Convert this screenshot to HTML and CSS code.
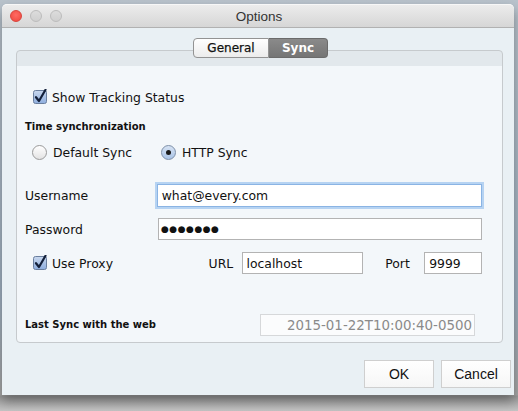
FILE: index.html
```html
<!DOCTYPE html>
<html>
<head>
<meta charset="utf-8">
<link rel="stylesheet" href="styles.css">
</head>
<body>
<div class="window">
  <div class="titlebar">
    <div class="lights">
      <span class="light red"></span>
      <span class="light gray"></span>
      <span class="light gray"></span>
    </div>
    <div class="title">Options</div>
  </div>
  <div class="content">
    <div class="tabwrap">
      <div class="tabs">
        <div class="tab">General</div>
        <div class="tab active">Sync</div>
      </div>
      <div class="box">
        <div class="row check-row first">
          <svg class="cb" width="14" height="15" viewBox="0 0 14 15"><defs><linearGradient id="g1" x1="0" y1="0" x2="0" y2="1"><stop offset="0" stop-color="#c9d8ee"/><stop offset="1" stop-color="#8eaede"/></linearGradient></defs><rect x="0.5" y="1.5" width="13" height="13" rx="2" fill="url(#g1)" stroke="#6a7f9e"/><path d="M3 8.2 L6 12 L12.5 0.8" fill="none" stroke="#13203a" stroke-width="2.2" stroke-linecap="round" stroke-linejoin="round"/></svg>
          <span class="lbl">Show Tracking Status</span>
        </div>
        <div class="section">Time synchronization</div>
        <div class="row radio-row">
          <div class="radio-item first-radio">
            <span class="radio"></span><span class="lbl">Default Sync</span>
          </div>
          <div class="radio-item">
            <span class="radio on"><span class="dot"></span></span><span class="lbl">HTTP Sync</span>
          </div>
        </div>
        <div class="row field-row user">
          <span class="flabel">Username</span>
          <div class="field focus">what@every.com</div>
        </div>
        <div class="row field-row pass">
          <span class="flabel">Password</span>
          <div class="field dots">●●●●●●●</div>
        </div>
        <div class="row proxy-row">
          <div class="proxy-check">
            <svg class="cb" width="14" height="15" viewBox="0 0 14 15"><defs><linearGradient id="g2" x1="0" y1="0" x2="0" y2="1"><stop offset="0" stop-color="#c9d8ee"/><stop offset="1" stop-color="#8eaede"/></linearGradient></defs><rect x="0.5" y="1.5" width="13" height="13" rx="2" fill="url(#g2)" stroke="#6a7f9e"/><path d="M3 8.2 L6 12 L12.5 0.8" fill="none" stroke="#13203a" stroke-width="2.2" stroke-linecap="round" stroke-linejoin="round"/></svg>
            <span class="lbl">Use Proxy</span>
          </div>
          <span class="flabel url-l">URL</span>
          <div class="field url">localhost</div>
          <span class="flabel port-l">Port</span>
          <div class="field port">9999</div>
        </div>
        <div class="row last-row">
          <span class="section">Last Sync with the web</span>
          <div class="field ro">2015-01-22T10:00:40-0500</div>
        </div>
      </div>
    </div>
    <div class="buttons">
      <div class="btn">OK</div>
      <div class="btn">Cancel</div>
    </div>
  </div>
</div>
</body>
</html>
```

FILE: styles.css
```css
html, body {
  margin: 0;
  padding: 0;
}
body {
  width: 518px;
  height: 411px;
  overflow: hidden;
  background: linear-gradient(#b9c3cc 0, #9fb0c0 300px, #a7a7a7 395px, #9a9a9a 396px, #c4c4c4 411px);
  font-family: "DejaVu Sans", sans-serif;
  color: #111;
}
.window {
  margin: 4px 0 0 2px;
  width: 512px;
  height: 391px;
  background: #e9f0f4;
  border-radius: 5px 5px 0 0;
  box-shadow: 0 6px 12px rgba(0,0,0,0.35);
  display: flex;
  flex-direction: column;
}
.titlebar {
  height: 22px;
  border-radius: 5px 5px 0 0;
  background: linear-gradient(#ececec, #d6d6d6);
  border-bottom: 1px solid #b1b1b1;
  border-top: 1px solid #f7f7f7;
  display: flex;
  align-items: center;
  position: relative;
}
.lights {
  display: flex;
  gap: 8px;
  margin-left: 8px;
}
.light {
  width: 12px;
  height: 12px;
  border-radius: 50%;
  box-sizing: border-box;
}
.light.red {
  background: radial-gradient(circle at 50% 40%, #ff6b63, #f0453c);
  border: 1px solid #d8443c;
}
.light.gray {
  background: linear-gradient(#dcdcdc, #cfcfcf);
  border: 1px solid #bcbcbc;
}
.title {
  flex: 1;
  text-align: center;
  margin-right: 58px;
  font-family: "Liberation Sans", sans-serif;
  font-size: 13.5px;
  color: #333;
}
.content {
  flex: 1;
  display: flex;
  flex-direction: column;
}
.tabwrap {
  margin: 10px 11px 0 14px;
  display: flex;
  flex-direction: column;
  align-items: center;
}
.tabs {
  display: flex;
  position: relative;
  z-index: 1;
  height: 20px;
  margin-left: 2px;
}
.tab {
  box-sizing: border-box;
  height: 20px;
  line-height: 18px;
  font-size: 12px;
  border: 1px solid #939393;
  text-align: center;
}
.tab:first-child {
  width: 76px;
  border-radius: 4px 0 0 4px;
  background: linear-gradient(#ffffff, #ececec);
  color: #111;
  -webkit-text-stroke: 0.25px #111;
}
.tab.active {
  width: 59px;
  border-left: none;
  border-radius: 0 4px 4px 0;
  background: linear-gradient(#8a8a8a, #757575);
  border-color: #6b6b6b;
  color: #fff;
  font-weight: bold;
}
.box {
  align-self: stretch;
  margin-top: -8px;
  height: 293px;
  box-sizing: border-box;
  border: 1px solid #c6cacd;
  border-radius: 4px;
  background: linear-gradient(#e2e8ec 0, #e2e8ec 15px, #f3f7fa 15px);
  padding: 0 20px 0 8px;
  display: flex;
  flex-direction: column;
}
.row {
  display: flex;
  align-items: center;
}
.lbl {
  font-size: 12.4px;
}
.cb {
  flex: none;
  margin-right: 5px;
  margin-top: -2px;
}
.check-row.first {
  height: 20px;
  margin-top: 36px;
  margin-left: 8px;
}
.section {
  font-size: 10px;
  font-weight: bold;
  line-height: 16px;
  margin-top: 12px;
}
.radio-row {
  height: 20px;
  margin-top: 7px;
  margin-left: 7px;
}
.radio-item {
  display: flex;
  align-items: center;
}
.first-radio {
  width: 129px;
}
.radio {
  width: 15px;
  height: 15px;
  box-sizing: border-box;
  border-radius: 50%;
  border: 1px solid #9a9a9a;
  background: linear-gradient(#ffffff, #e3e3e3);
  margin-right: 6px;
  display: flex;
  align-items: center;
  justify-content: center;
}
.radio.on {
  background: linear-gradient(#d6e3f3, #a9c3e6);
  border-color: #7d8fa8;
}
.dot {
  width: 5px;
  height: 5px;
  border-radius: 50%;
  background: #1a1a1a;
}
.flabel {
  font-size: 12.4px;
}
.field {
  box-sizing: border-box;
  background: #fff;
  border: 1px solid #b3b3b3;
  font-size: 12.4px;
  padding-left: 4px;
  display: flex;
  align-items: center;
  white-space: nowrap;
}
.field-row .flabel {
  width: 133px;
}
.user {
  margin-top: 22px;
  height: 23px;
}
.user .field {
  width: 326px;
  height: 23px;
  margin-left: -1px;
}
.field.focus {
  border: 1px solid #8ab4e4;
  box-shadow: 0 0 0 2px #b6d3f2;
}
.pass {
  margin-top: 11px;
  height: 22px;
}
.pass .field {
  width: 324px;
  height: 22px;
}
.dots {
  font-size: 9px;
  letter-spacing: 0.5px;
  padding-left: 2px;
}
.proxy-row {
  margin-top: 12px;
  height: 22px;
}
.proxy-check {
  display: flex;
  align-items: center;
  margin-left: 8px;
  width: 176px;
}
.url-l {
  width: 33px;
}
.field.url {
  width: 122px;
  height: 22px;
}
.port-l {
  margin-left: 22px;
  width: 39px;
}
.field.port {
  width: 58px;
  height: 22px;
}
.last-row {
  margin-top: 40px;
  height: 22px;
}
.last-row .section {
  margin-top: 0;
  width: 235px;
}
.field.ro {
  width: 215px;
  height: 22px;
  border-color: #d6d8da;
  background: #fbfcfd;
  justify-content: flex-end;
  padding-right: 2px;
  color: #8a8a8a;
  font-size: 13.4px;
}
.buttons {
  display: flex;
  justify-content: flex-end;
  gap: 7px;
  margin: 17px 3px 0 0;
}
.btn {
  width: 70px;
  height: 28px;
  box-sizing: border-box;
  border: 1px solid #cfcfcf;
  background: linear-gradient(#ffffff, #f6f6f6);
  font-family: "Liberation Sans", sans-serif;
  font-size: 14px;
  display: flex;
  align-items: center;
  justify-content: center;
  color: #111;
}
```
